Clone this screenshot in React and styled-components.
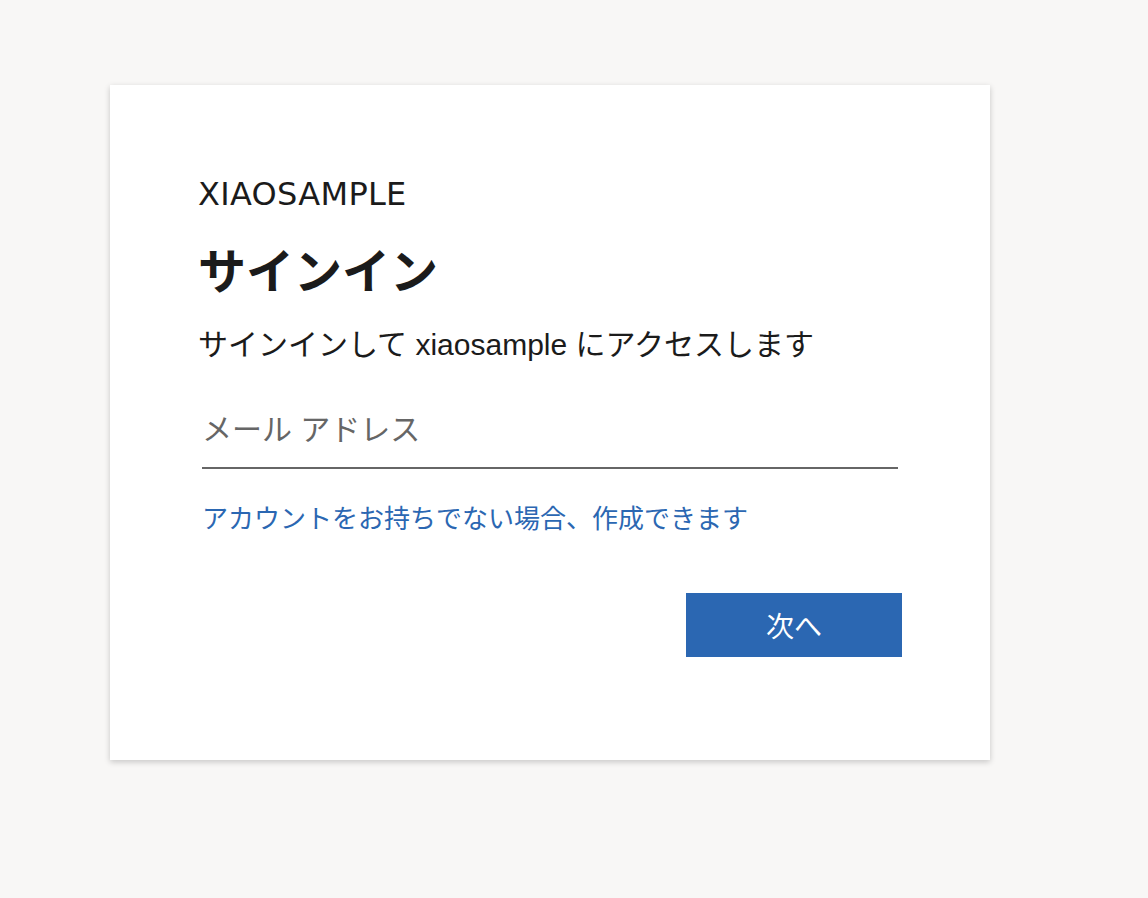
import styled, { createGlobalStyle } from "styled-components";

const GlobalStyle = createGlobalStyle`
  html, body {
    margin: 0;
    padding: 0;
    background: #f8f7f6;
  }
  body {
    font-family: "Noto Sans CJK JP", "Liberation Sans", sans-serif;
    color: #1b1b1b;
  }
`;

const Page = styled.div`
  min-height: 898px;
  padding: 85px 0 0 110px;
  box-sizing: border-box;
`;

const Card = styled.div`
  width: 880px;
  height: 675px;
  box-sizing: border-box;
  padding: 91px 88px 0 88px;
  background: #ffffff;
  box-shadow: 0 2px 6px rgba(0, 0, 0, 0.2);
`;

const Logo = styled.div`
  font-family: "DejaVu Sans", sans-serif;
  font-size: 32px;
  line-height: 36px;
  letter-spacing: 0.3px;
  color: #1b1b1b;
`;

const Title = styled.h1`
  margin: 33px 0 0;
  font-family: "Liberation Sans", "Noto Sans CJK JP", sans-serif;
  font-size: 48px;
  line-height: 56px;
  font-weight: 700;
`;

const Subtitle = styled.p`
  margin: 24px 0 0;
  font-family: "Liberation Sans", "Noto Sans CJK JP", sans-serif;
  font-size: 30px;
  line-height: 40px;
`;

const Field = styled.div`
  padding: 0 4px;
  margin-top: 45px;
`;

const Input = styled.input`
  display: block;
  width: 100%;
  box-sizing: border-box;
  border: none;
  border-bottom: 2px solid #666666;
  outline: none;
  padding: 0 0 17px;
  font-family: "Liberation Sans", "Noto Sans CJK JP", sans-serif;
  font-size: 30px;
  line-height: 40px;
  color: #1b1b1b;
  background: transparent;
  &::placeholder {
    color: #666666;
  }
`;

const Link = styled.a`
  display: block;
  margin: 32px 4px 0;
  font-family: "Liberation Sans", "Noto Sans CJK JP", sans-serif;
  font-size: 26px;
  line-height: 36px;
  color: #2b67b2;
  text-decoration: none;
  cursor: pointer;
`;

const Actions = styled.div`
  display: flex;
  justify-content: flex-end;
  margin-top: 56px;
`;

const Button = styled.button`
  width: 216px;
  height: 64px;
  border: none;
  background: #2b67b2;
  color: #ffffff;
  font-family: "Liberation Sans", "Noto Sans CJK JP", sans-serif;
  font-size: 28px;
  cursor: pointer;
`;

const App = () => {
  return (
    <Page>
      <GlobalStyle />
      <Card>
        <Logo>XIAOSAMPLE</Logo>
        <Title>サインイン</Title>
        <Subtitle>サインインして xiaosample にアクセスします</Subtitle>
        <Field>
          <Input type="email" placeholder="メール アドレス" />
        </Field>
        <Link>アカウントをお持ちでない場合、作成できます</Link>
        <Actions>
          <Button>次へ</Button>
        </Actions>
      </Card>
    </Page>
  );
};

export default App;
